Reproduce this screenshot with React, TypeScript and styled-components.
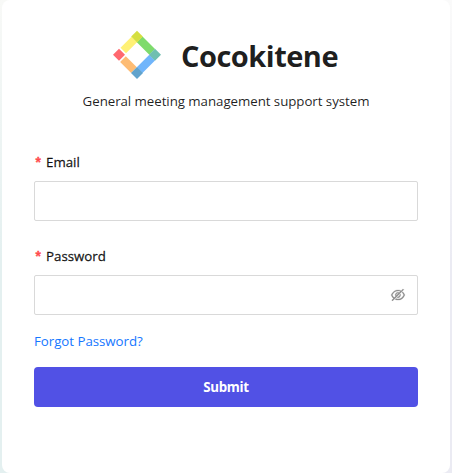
import React from "react";
import styled, { createGlobalStyle } from "styled-components";
import { AiOutlineEyeInvisible } from "react-icons/ai";

const GlobalStyle = createGlobalStyle`
  * { box-sizing: border-box; }
  body {
    margin: 0;
    font-family: "Segoe UI", "Open Sans", "Noto Sans", sans-serif;
    font-size: 13.3px;
    color: rgba(0, 0, 0, 0.88);
  }
`;

const Page = styled.main`
  height: 473px;
  padding: 0 2px;
  overflow: hidden;
  background:
    linear-gradient(180deg, #fafafa, #ebebf3 55%, #ebebf3) right / 50% 100% no-repeat,
    linear-gradient(180deg, #f8f9f7, #e4f0f0 55%, #e4f0f0);
`;

const Card = styled.section`
  height: 473px;
  padding: 30px 32px 0;
  border-radius: 8px;
  background: #fff;
`;

const Brand = styled.header`
  display: flex;
  align-items: center;
  height: 50px;
  padding-left: 78px;
  gap: 19px;
`;

const Logo = styled.svg`
  width: 50px;
  height: 50px;
  flex: none;
  filter: blur(0.4px);
`;

const Title = styled.h1`
  margin: 2px 0 0;
  font-size: 29px;
  line-height: 38px;
  font-weight: 700;
  letter-spacing: -0.5px;
`;

const Subtitle = styled.p`
  margin: 10px 0 0;
  text-align: center;
  line-height: 22px;
  letter-spacing: -0.05px;
  white-space: nowrap;
`;

const Form = styled.form`
  display: flex;
  flex-direction: column;
  margin-top: 39px;
`;

const Field = styled.div`
  display: flex;
  flex-direction: column;
  gap: 8px;
  height: 94px;
`;

const Label = styled.label`
  display: flex;
  gap: 4px;
  height: 22px;
  line-height: 22px;
  font-weight: 500;
  -webkit-text-stroke: 0.3px currentColor;
`;

const Required = styled.span`
  width: 8px;
  padding-top: 2px;
  color: #ff4d4f;
  font-family: "Liberation Mono", monospace;
  font-size: 14px;
  font-weight: 700;
`;

const InputBox = styled.div`
  display: flex;
  align-items: center;
  height: 40px;
  padding: 0 11px;
  border: 1px solid #d9d9d9;
  border-radius: 2px;
`;

const Input = styled.input`
  flex: 1;
  min-width: 0;
  padding: 0;
  border: 0;
  outline: 0;
  background: transparent;
  font: inherit;
`;

const RevealIcon = styled(AiOutlineEyeInvisible)`
  width: 16px;
  height: 16px;
  color: #8c8c8c;
  stroke-width: 16px;
`;

const ForgotLink = styled.a`
  align-self: flex-start;
  margin-top: -9px;
  line-height: 22px;
  letter-spacing: -0.04px;
  color: #1677ff;
  text-decoration: none;
`;

const Submit = styled.button`
  height: 40px;
  margin-top: 15px;
  padding: 0;
  border: 0;
  border-radius: 4px;
  background: #5151e5;
  color: #fff;
  font: inherit;
  font-weight: 700;
  letter-spacing: -0.3px;
`;

const BrandLogo = () => (
  <Logo viewBox="0 0 50 50" aria-hidden="true">
    <path d="M19.5 6.8 25 12.3 14 23.3 8.5 17.8Z" fill="#fff176" />
    <path d="M30.5 6.5 43 19 37.3 24.7 24.8 12.2Z" fill="#7edb6c" />
    <path d="M37.3 24.7 43 30.4 30.5 43 24.8 37.3Z" fill="#70b5fb" />
    <path d="M13.8 26.3 24.8 37.3 19.1 43 8.1 32Z" fill="#fdbc74" />
    <path d="M25 .8 30.8 6.6 25 12.4 19.2 6.6Z" fill="#d5df40" />
    <path d="M43 18.8 49 24.8 43 30.8 37 24.8Z" fill="#70bfb0" />
    <path d="M25 37 31 43 25 49 19 43Z" fill="#62a3cc" />
    <path d="M7 18.8 13 24.8 7 30.8 1 24.8Z" fill="#ff686f" />
  </Logo>
);

export default function App() {
  return (
    <>
      <GlobalStyle />
      <Page>
        <Card>
          <Brand>
            <BrandLogo />
            <Title>Cocokitene</Title>
          </Brand>
          <Subtitle>General meeting management support system</Subtitle>
          <Form>
            <Field>
              <Label htmlFor="email"><Required>*</Required>Email</Label>
              <InputBox><Input id="email" type="email" /></InputBox>
            </Field>
            <Field>
              <Label htmlFor="password"><Required>*</Required>Password</Label>
              <InputBox><Input id="password" type="password" /><RevealIcon /></InputBox>
            </Field>
            <ForgotLink href="#">Forgot Password?</ForgotLink>
            <Submit type="button">Submit</Submit>
          </Form>
        </Card>
      </Page>
    </>
  );
}
